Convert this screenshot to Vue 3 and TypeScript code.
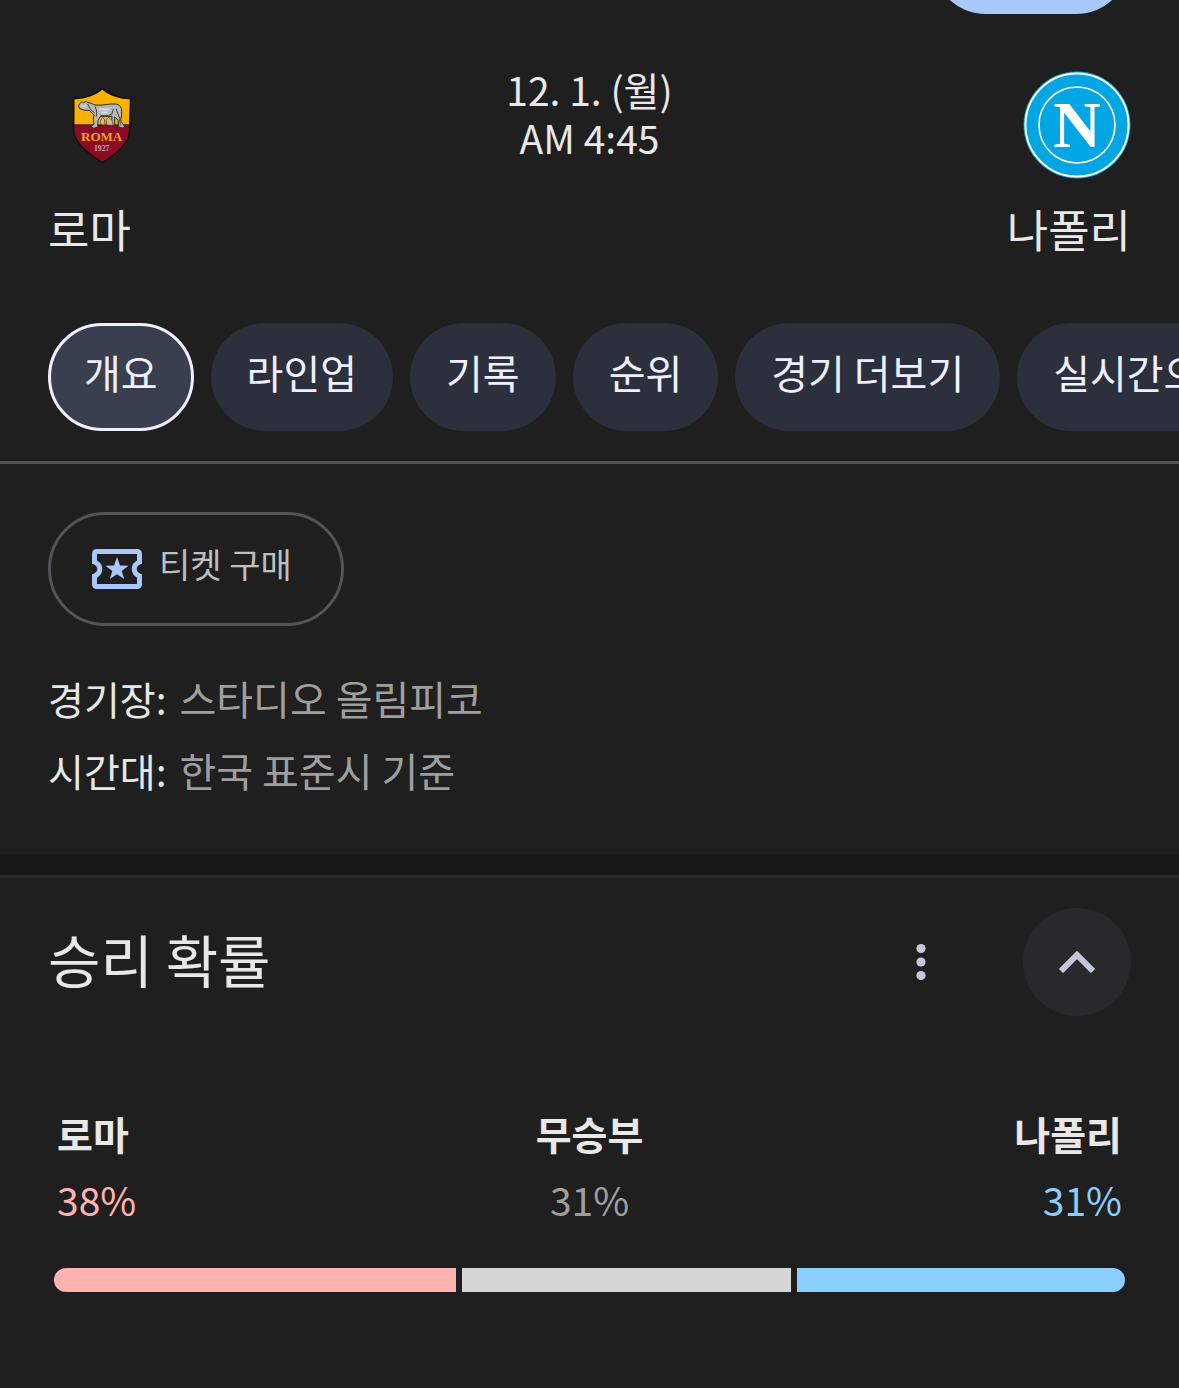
<script setup lang="ts">
import { ref } from 'vue'

interface Outcome {
  key: string
  label: string
  percent: number
}

const tabs: string[] = ['개요', '라인업', '기록', '순위', '경기 더보기', '실시간으로 보기']
const activeTab = ref<string>('개요')

const details = [
  { term: '경기장:', value: '스타디오 올림피코' },
  { term: '시간대:', value: '한국 표준시 기준' },
]

const outcomes: Outcome[] = [
  { key: 'home', label: '로마', percent: 38 },
  { key: 'draw', label: '무승부', percent: 31 },
  { key: 'away', label: '나폴리', percent: 31 },
]

const expanded = ref(true)
</script>

<template>
  <main class="page">
    <header class="topbar">
      <button class="follow" type="button" aria-label="팔로우"></button>
    </header>

    <section class="match">
      <div class="team">
        <svg class="crest" viewBox="24 3 324 324" aria-hidden="true">
          <defs>
            <clipPath id="shield">
              <path d="M187 55 C169 73 133 87 101 85 L101 180 C103 222 145 251 187 278 C229 251 267 222 269 180 L272 85 C240 87 204 73 187 55 Z" />
            </clipPath>
          </defs>
          <g clip-path="url(#shield)">
            <rect x="90" y="40" width="190" height="126" fill="#fbb004" />
            <rect x="90" y="165" width="190" height="120" fill="#8c0a25" />
            <rect x="90" y="163" width="190" height="3" fill="#3b1410" />
          </g>
          <path d="M187 55 C169 73 133 87 101 85 L101 180 C103 222 145 251 187 278 C229 251 267 222 269 180 L272 85 C240 87 204 73 187 55 Z" fill="none" stroke="#15120f" stroke-width="5" />
          <path d="M119 101 L126 94 L131 99 L139 93 L143 98 C153 97 157 104 167 105 C187 108 208 100 226 102 C240 104 245 112 245 124 C246 139 241 144 243 154 L254 170 L247 174 L235 170 L235 151 L224 141 L224 166 L215 166 L216 138 C202 142 190 138 181 139 L174 152 L173 171 L161 175 L153 169 L162 163 L160 148 L162 135 L148 121 L134 121 L119 116 L116 108 Z" fill="#b7b8b8" stroke="#2b2b2b" stroke-width="3" stroke-linejoin="round" />
          <path d="M143 102 L152 119 L164 129 M165 109 L170 123 L169 139 M181 137 L205 137 L216 131 L220 117 M228 116 L239 145 L241 166" fill="none" stroke="#444" stroke-width="3" />
          <path d="M124 108 H137 M176 118 H209 M183 127 H202" fill="none" stroke="#dedede" stroke-width="5" />
          <path d="M184 164 L181 154 L187 142 L193 147 L195 165 Z M201 165 L198 151 L206 142 L216 151 L220 166 Z" fill="#c9bd98" stroke="#4d3c20" stroke-width="2" />
          <text class="roma" x="185" y="212" text-anchor="middle">ROMA</text>
          <text class="year" x="185" y="244" text-anchor="middle">1927</text>
        </svg>
        <span class="team-name">로마</span>
      </div>

      <p class="kickoff">12. 1. (월)<br />AM 4:45</p>

      <div class="team away">
        <svg class="crest" viewBox="0 0 108 108" aria-hidden="true">
          <circle cx="54" cy="54" r="53.5" fill="#12a0d7" />
          <circle cx="54" cy="54" r="51.5" fill="#02a6e2" stroke="#fff" stroke-width="2" />
          <circle cx="54" cy="54" r="38" fill="none" stroke="#fff" stroke-width="1.6" />
          <text class="napoli" x="54" y="76" text-anchor="middle">N</text>
        </svg>
        <span class="team-name">나폴리</span>
      </div>
    </section>

    <nav class="tabs" aria-label="경기 메뉴">
      <button
        v-for="tab in tabs"
        :key="tab"
        type="button"
        class="tab"
        :class="{ active: tab === activeTab }"
        @click="activeTab = tab"
      >{{ tab }}</button>
    </nav>

    <section class="overview">
      <button class="ticket" type="button">
        <svg class="ticket-icon" viewBox="0 0 50 40" aria-hidden="true">
          <path d="M5 2.5 H45 Q47.5 2.5 47.5 5 V13 C40.5 16 40.5 24 47.5 27 V35 Q47.5 37.5 45 37.5 H5 Q2.5 37.5 2.5 35 V27 C9.5 24 9.5 16 2.5 13 V5 Q2.5 2.5 5 2.5 Z" fill="none" stroke="#a8c7fa" stroke-width="5" />
          <path d="M25 8 L28 16.5 L36.5 16.7 L29.7 22 L32.2 30 L25 25.2 L17.8 30 L20.3 22 L13.5 16.7 L22 16.5 Z" fill="#a8c7fa" />
        </svg>
        <span>티켓 구매</span>
      </button>

      <dl class="details">
        <div v-for="item in details" :key="item.term" class="detail">
          <dt>{{ item.term }}</dt>
          <dd>{{ item.value }}</dd>
        </div>
      </dl>
    </section>

    <section class="probability">
      <div class="heading">
        <h2>승리 확률</h2>
        <button class="more" type="button" aria-label="옵션 더보기">
          <svg viewBox="0 0 12 38" aria-hidden="true">
            <circle cx="6" cy="5.5" r="4.6" />
            <circle cx="6" cy="19" r="4.6" />
            <circle cx="6" cy="32.5" r="4.6" />
          </svg>
        </button>
        <button class="collapse" type="button" aria-label="접기" :aria-expanded="expanded" @click="expanded = !expanded">
          <svg viewBox="0 0 36 22" aria-hidden="true">
            <path d="M2 20 L18 4 L34 20" />
          </svg>
        </button>
      </div>

      <template v-if="expanded">
        <div class="outcomes">
          <div v-for="o in outcomes" :key="o.key" class="outcome" :class="o.key">
            <span class="label">{{ o.label }}</span>
            <span class="percent">{{ o.percent }}%</span>
          </div>
        </div>
        <div class="bar">
          <div v-for="o in outcomes" :key="o.key" class="segment" :class="o.key" :style="{ flexGrow: o.percent }"></div>
        </div>
      </template>
    </section>
  </main>
</template>

<style>
body {
  margin: 0;
  background: #1f1f1f;
}
</style>

<style scoped>
.page {
  min-height: 100vh;
  overflow: hidden;
  background: #1f1f1f;
  color: #e8e8e8;
  font-family: "Noto Sans CJK KR", sans-serif;
  font-size: 39px;
  line-height: 48px;
}

button {
  margin: 0;
  padding: 0;
  border: 0;
  background: none;
  color: inherit;
  font: inherit;
  cursor: pointer;
}

.topbar {
  display: flex;
  align-items: flex-end;
  justify-content: flex-end;
  height: 14px;
  padding: 0 49px;
  overflow: hidden;
}

.follow {
  flex: none;
  width: 198px;
  height: 108px;
  border-radius: 54px;
  background: #a8c7fa;
}

.match {
  display: grid;
  grid-template-columns: 1fr auto 1fr;
  align-items: start;
  padding: 51px 48px 64px;
}

.team {
  display: flex;
  flex-direction: column;
  align-items: flex-start;
  gap: 20px;
  padding-top: 6px;
}

.team.away {
  align-items: flex-end;
}

.crest {
  width: 108px;
  height: 108px;
}

.roma {
  font: bold 39px "Liberation Serif", serif;
  fill: #f4a51a;
}

.year {
  font: bold 23px "Liberation Serif", serif;
  fill: #c9a9a6;
}

.napoli {
  font: bold 66px "Liberation Serif", serif;
  fill: #fff;
}

.team-name {
  font-size: 45px;
  line-height: 60px;
}

.kickoff {
  margin: 0;
  text-align: center;
}

.tabs {
  display: flex;
  gap: 17px;
  padding: 0 48px 30px;
  overflow: hidden;
  border-bottom: 3px solid #505256;
}

.tab {
  flex: none;
  box-sizing: border-box;
  height: 108px;
  padding: 0 36px 10px;
  border-radius: 54px;
  background: #2c2f3c;
  color: #eef0ff;
  font-size: 40px;
  white-space: nowrap;
}

.tab.active {
  padding: 0 33px 10px;
  border: 3px solid #eef0ff;
  background: #3a3f4f;
}

.overview {
  padding: 48px;
  border-bottom: 21px solid #171717;
}

.ticket {
  display: flex;
  align-items: center;
  gap: 17px;
  box-sizing: border-box;
  height: 114px;
  padding: 0 49px 0 41px;
  border: 3px solid #525457;
  border-radius: 57px;
  color: #bfbfbf;
  font-size: 34px;
}

.ticket span {
  padding-bottom: 10px;
}

.ticket-icon {
  width: 50px;
  height: 40px;
}

.details {
  margin: 36px 0 0;
}

.detail {
  display: flex;
  align-items: baseline;
  gap: 13px;
  line-height: 72px;
}

.detail dd {
  margin: 0;
  color: #9e9e9e;
  font-size: 40px;
}

.probability {
  padding: 30px 48px 96px;
  border-top: 3px solid #28292c;
}

.heading {
  display: flex;
  align-items: center;
}

.heading h2 {
  flex: 1;
  margin: 0;
  padding-bottom: 9px;
  font-size: 57px;
  font-weight: 400;
  line-height: 72px;
}

.more,
.collapse {
  display: flex;
  align-items: center;
  justify-content: center;
  width: 108px;
  height: 108px;
  border-radius: 50%;
}

.more {
  margin-right: 48px;
}

.more svg {
  width: 12px;
  height: 38px;
  fill: #c4c7dc;
}

.collapse {
  background: #29292b;
}

.collapse svg {
  width: 36px;
  height: 22px;
  fill: none;
  stroke: #c4c7dc;
  stroke-width: 6px;
}

.outcomes {
  display: grid;
  grid-template-columns: 1fr auto 1fr;
  padding: 84px 9px 0;
}

.outcome {
  display: flex;
  flex-direction: column;
  line-height: 66px;
}

.outcome.draw {
  align-items: center;
}

.outcome.away {
  align-items: flex-end;
}

.label {
  font-weight: 700;
}

.home .percent {
  color: #ffb3b0;
}

.draw .percent {
  color: #9e9e9e;
}

.away .percent {
  color: #89cefe;
}

.bar {
  display: flex;
  gap: 6px;
  height: 24px;
  margin: 36px 6px 0;
  overflow: hidden;
  border-radius: 12px;
}

.segment {
  flex-basis: 0;
}

.segment.home {
  background: #ffb3b0;
}

.segment.draw {
  background: #d6d6d6;
}

.segment.away {
  background: #89cefe;
}
</style>
